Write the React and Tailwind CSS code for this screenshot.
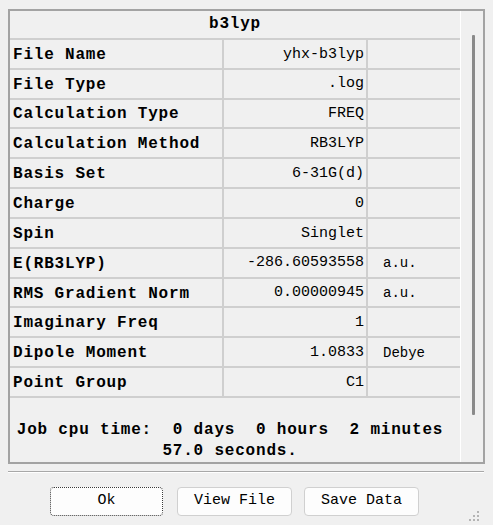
import React from "react";

const rows = [
  { label: "File Name", value: "yhx-b3lyp", unit: "" },
  { label: "File Type", value: ".log", unit: "" },
  { label: "Calculation Type", value: "FREQ", unit: "" },
  { label: "Calculation Method", value: "RB3LYP", unit: "" },
  { label: "Basis Set", value: "6-31G(d)", unit: "" },
  { label: "Charge", value: "0", unit: "" },
  { label: "Spin", value: "Singlet", unit: "" },
  { label: "E(RB3LYP)", value: "-286.60593558", unit: "a.u." },
  { label: "RMS Gradient Norm", value: "0.00000945", unit: "a.u." },
  { label: "Imaginary Freq", value: "1", unit: "" },
  { label: "Dipole Moment", value: "1.0833", unit: "Debye" },
  { label: "Point Group", value: "C1", unit: "" },
];

function SizeGrip() {
  return (
    <svg width="12" height="12" viewBox="0 0 12 12">
      {[
        [9, 1],
        [5, 5],
        [9, 5],
        [1, 9],
        [5, 9],
        [9, 9],
      ].map(([x, y]) => (
        <rect key={`${x}-${y}`} x={x} y={y} width="2" height="2" fill="#b4b4b4" />
      ))}
    </svg>
  );
}

export default function App() {
  const mono = { fontFamily: '"Liberation Mono", "DejaVu Sans Mono", monospace' };

  return (
    <div className="w-[493px] h-[525px] bg-[#f0f0f0] pt-[9px] px-[8px] text-black" style={mono}>
      {/* framed result panel */}
      <div className="flex h-[455px] border-2 border-[#a3a3a3]">
        <div className="w-[450px] flex flex-col">
          <div className="h-[29px] border-b-2 border-[#cfcfcf] flex items-center justify-center font-bold text-[16px] tracking-[0.8px]">
            b3lyp
          </div>
          {rows.map((row) => (
            <div key={row.label} className="flex h-[30px] border-b-2 border-[#cfcfcf]">
              <div className="w-[214px] border-r-2 border-[#cfcfcf] pl-[3px] pt-[2px] flex items-center font-bold text-[16px] tracking-[0.8px] whitespace-nowrap">
                {row.label}
              </div>
              <div className="w-[144px] border-r-2 border-[#cfcfcf] pr-[2px] pt-[2px] flex items-center justify-end text-[15px] whitespace-nowrap">
                {row.value}
              </div>
              <div className="flex-1 pl-[15px] pt-[2px] flex items-center text-[14px] whitespace-nowrap">
                {row.unit}
              </div>
            </div>
          ))}
          <div className="pt-[22px] pl-0 pr-[10px] text-center font-bold text-[16px] tracking-[0.8px] leading-[21px] whitespace-pre-wrap">
            {"Job cpu time:  0 days  0 hours  2 minutes 57.0 seconds."}
          </div>
        </div>
        {/* scroll track */}
        <div className="flex-1 border-l border-white pt-[24px] pl-[11px]">
          <div className="w-[3px] h-[380px] bg-[#8a8a8a] rounded-[1px]" />
        </div>
      </div>

      <div className="mt-[7px] h-[2px] border-t border-[#a8a8a8] border-b border-b-white mr-[1px]" />

      <div className="relative flex items-center pt-[14px] pl-[42px] text-[15px]">
        <button className="w-[113px] h-[29px] bg-[#fdfdfd] border border-dotted border-[#3a3a3a] rounded-[4px]">
          Ok
        </button>
        <button className="ml-[14px] w-[115px] h-[29px] bg-[#fdfdfd] border border-[#d0d0d0] rounded-[4px]">
          View File
        </button>
        <button className="ml-[12px] w-[115px] h-[29px] bg-[#fdfdfd] border border-[#d0d0d0] rounded-[4px]">
          Save Data
        </button>
        <div className="absolute right-[5px] bottom-[-6px]">
          <SizeGrip />
        </div>
      </div>
    </div>
  );
}
